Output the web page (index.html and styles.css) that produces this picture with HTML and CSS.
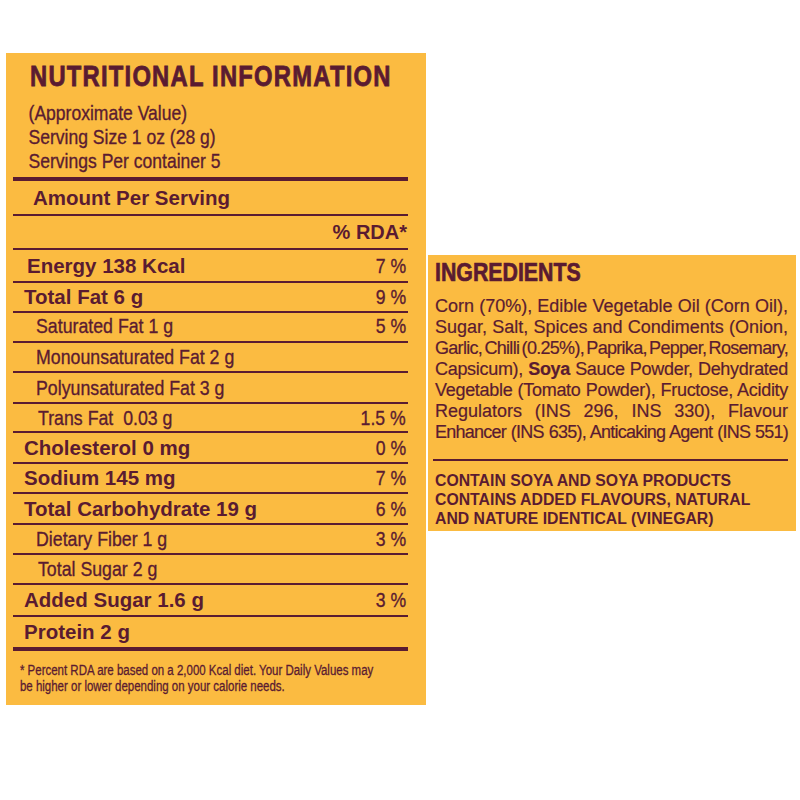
FILE: index.html
```html
<!DOCTYPE html>
<html lang="en">
<head>
<meta charset="utf-8">
<title>Nutritional Information</title>
<link rel="stylesheet" href="styles.css">
</head>
<body>
<div class="page">
  <section class="nutri">
    <h1 class="n-title"><span class="cond">NUTRITIONAL INFORMATION</span></h1>
    <div class="n-sub">(Approximate Value)<br>Serving Size 1 oz (28 g)<br>Servings Per container 5</div>
    <div class="n-table">
      <div class="row h35"><span class="amount">Amount Per Serving</span></div>
      <div class="row h34 end"><span class="rda-h">% RDA*</span></div>
      <div class="row h33"><span class="lab main energy">Energy 138 Kcal</span><span class="val">7 %</span></div>
      <div class="row"><span class="lab main">Total Fat 6 g</span><span class="val">9 %</span></div>
      <div class="row top"><span class="lab sub">Saturated Fat 1 g</span><span class="val">5 %</span></div>
      <div class="row"><span class="lab sub">Monounsaturated Fat 2 g</span></div>
      <div class="row h31"><span class="lab sub">Polyunsaturated Fat 3 g</span></div>
      <div class="row h29"><span class="lab sub trans">Trans Fat&nbsp; 0.03 g</span><span class="val">1.5 %</span></div>
      <div class="row h31"><span class="lab main">Cholesterol 0 mg</span><span class="val">0 %</span></div>
      <div class="row"><span class="lab main">Sodium 145 mg</span><span class="val">7 %</span></div>
      <div class="row h31"><span class="lab main">Total Carbohydrate 19 g</span><span class="val">6 %</span></div>
      <div class="row"><span class="lab sub">Dietary Fiber 1 g</span><span class="val">3 %</span></div>
      <div class="row"><span class="lab sub trans">Total Sugar 2 g</span></div>
      <div class="row h32"><span class="lab main">Added Sugar 1.6 g</span><span class="val">3 %</span></div>
      <div class="row last"><span class="lab main">Protein 2 g</span></div>
    </div>
    <p class="foot">* Percent RDA are based on a 2,000 Kcal diet. Your Daily Values may<br>be higher or lower depending on your calorie needs.</p>
  </section>

  <section class="ingr">
    <h2 class="i-title"><span class="cond">INGREDIENTS</span></h2>
    <p class="i-body">
      <span class="ln">Corn (70%), Edible Vegetable Oil (Corn Oil),</span>
      <span class="ln">Sugar, Salt, Spices and Condiments (Onion,</span>
      <span class="ln sq3">Garlic, Chilli (0.25%), Paprika, Pepper, Rosemary,</span>
      <span class="ln sq1">Capsicum), <b>Soya</b> Sauce Powder, Dehydrated</span>
      <span class="ln sq1">Vegetable (Tomato Powder), Fructose, Acidity</span>
      <span class="ln">Regulators (INS 296, INS 330), Flavour</span>
      <span class="ln sq2">Enhancer (INS 635), Anticaking Agent (INS 551)</span>
    </p>
    <hr class="i-rule">
    <p class="i-allergen">CONTAIN SOYA AND SOYA PRODUCTS<br>CONTAINS ADDED FLAVOURS, NATURAL<br>AND NATURE IDENTICAL (VINEGAR)</p>
  </section>
</div>
</body>
</html>
```

FILE: styles.css
```css
html, body {
  margin: 0;
  padding: 0;
  background: #ffffff;
}

.page {
  display: flex;
  align-items: flex-start;
  color: #5a1b31;
  font-family: "Liberation Sans", Arial, sans-serif;
}

/* condensed look: Helvetica Condensed is not available, so squeeze horizontally */
.cond {
  display: inline-block;
  white-space: nowrap;
  transform: scaleX(0.82);
  transform-origin: left center;
}

/* ---------- Nutrition panel ---------- */
.nutri {
  box-sizing: border-box;
  width: 420px;
  margin: 53px 0 0 6px;
  padding: 8.5px 0 11px 0;
  background: #fbbb41;
}

.n-title {
  margin: 0;
  padding-left: 24px;
  white-space: nowrap;
  font-weight: 700;
  font-size: 29px;
  line-height: 29px;
  letter-spacing: 1.5px;
  -webkit-text-stroke: 0.8px #5a1b31;
}

.n-sub {
  margin-top: 10.5px;
  padding-left: 27px;
  white-space: nowrap;
  font-size: 21px;
  line-height: 24px;
  -webkit-text-stroke: 0.35px #5a1b31;
  transform: scaleX(0.835);
  transform-origin: left top;
}

.n-table {
  margin: 4px 18px 0 7px;
  border-top: 4px solid #5a1b31;
}

.row {
  box-sizing: border-box;
  height: 30px;
  display: flex;
  align-items: center;
  justify-content: space-between;
  border-bottom: 2px solid #5a1b31;
  padding-right: 2px;
}

.row.h29 { height: 29px; }
.row.h31 { height: 31px; }
.row.h32 { height: 32px; }
.row.h33 { height: 33px; }
.row.h34 { height: 34px; }
.row.h35 { height: 35px; }
.row.top { align-items: flex-start; padding-top: 1px; }
.row.end { justify-content: flex-end; padding-right: 1px; }
.row.last {
  height: 34px;
  border-bottom-width: 4px;
}

.amount {
  padding-left: 20px;
  font-weight: 700;
  font-size: 20.5px;
  line-height: 22px;
}

.rda-h {
  font-weight: 700;
  font-size: 20px;
  line-height: 22px;
}

.lab {
  line-height: 24px;
  white-space: nowrap;
}

.lab.main {
  padding-left: 11px;
  font-weight: 700;
  font-size: 20.5px;
}

.lab.energy { padding-left: 14px; }

.lab.sub {
  display: inline-block;
  margin-left: 23px;
  font-size: 21px;
  -webkit-text-stroke: 0.35px #5a1b31;
  transform: scaleX(0.845);
  transform-origin: left center;
}

.lab.sub.trans { margin-left: 24.5px; }

.val {
  display: inline-block;
  white-space: nowrap;
  font-size: 21px;
  line-height: 24px;
  -webkit-text-stroke: 0.35px #5a1b31;
  transform: scaleX(0.84);
  transform-origin: right center;
}

.foot {
  margin: 11px 0 0 0;
  padding-left: 17px;
  white-space: nowrap;
  font-size: 14px;
  line-height: 16px;
  -webkit-text-stroke: 0.3px #5a1b31;
  transform: scaleX(0.82);
  transform-origin: left top;
}

/* ---------- Ingredients panel ---------- */
.ingr {
  box-sizing: border-box;
  width: 368px;
  margin: 255px 0 0 2px;
  padding: 4px 8px 3px 7px;
  background: #fbbb41;
}

.i-title {
  margin: 0;
  white-space: nowrap;
  font-weight: 700;
  font-size: 26px;
  line-height: 26px;
  -webkit-text-stroke: 0.7px #5a1b31;
}

.i-body {
  margin: 11.3px 0 0 0;
  font-size: 18px;
  line-height: 21px;
  -webkit-text-stroke: 0.2px #5a1b31;
}

.ln {
  display: block;
  text-align: justify;
  text-align-last: justify;
}

.ln b { font-weight: 700; }

.sq1 { letter-spacing: -0.3px; }
.sq2 { letter-spacing: -0.75px; word-spacing: -1px; }
.sq3 { letter-spacing: -0.7px; word-spacing: -2px; }

.i-rule {
  margin: 15.7px 0 0 -2px;
  border: 0;
  height: 2px;
  background: #5a1b31;
}

.i-allergen {
  margin: 10px 0 0 0;
  font-weight: 700;
  font-size: 15.8px;
  line-height: 19px;
}
```
